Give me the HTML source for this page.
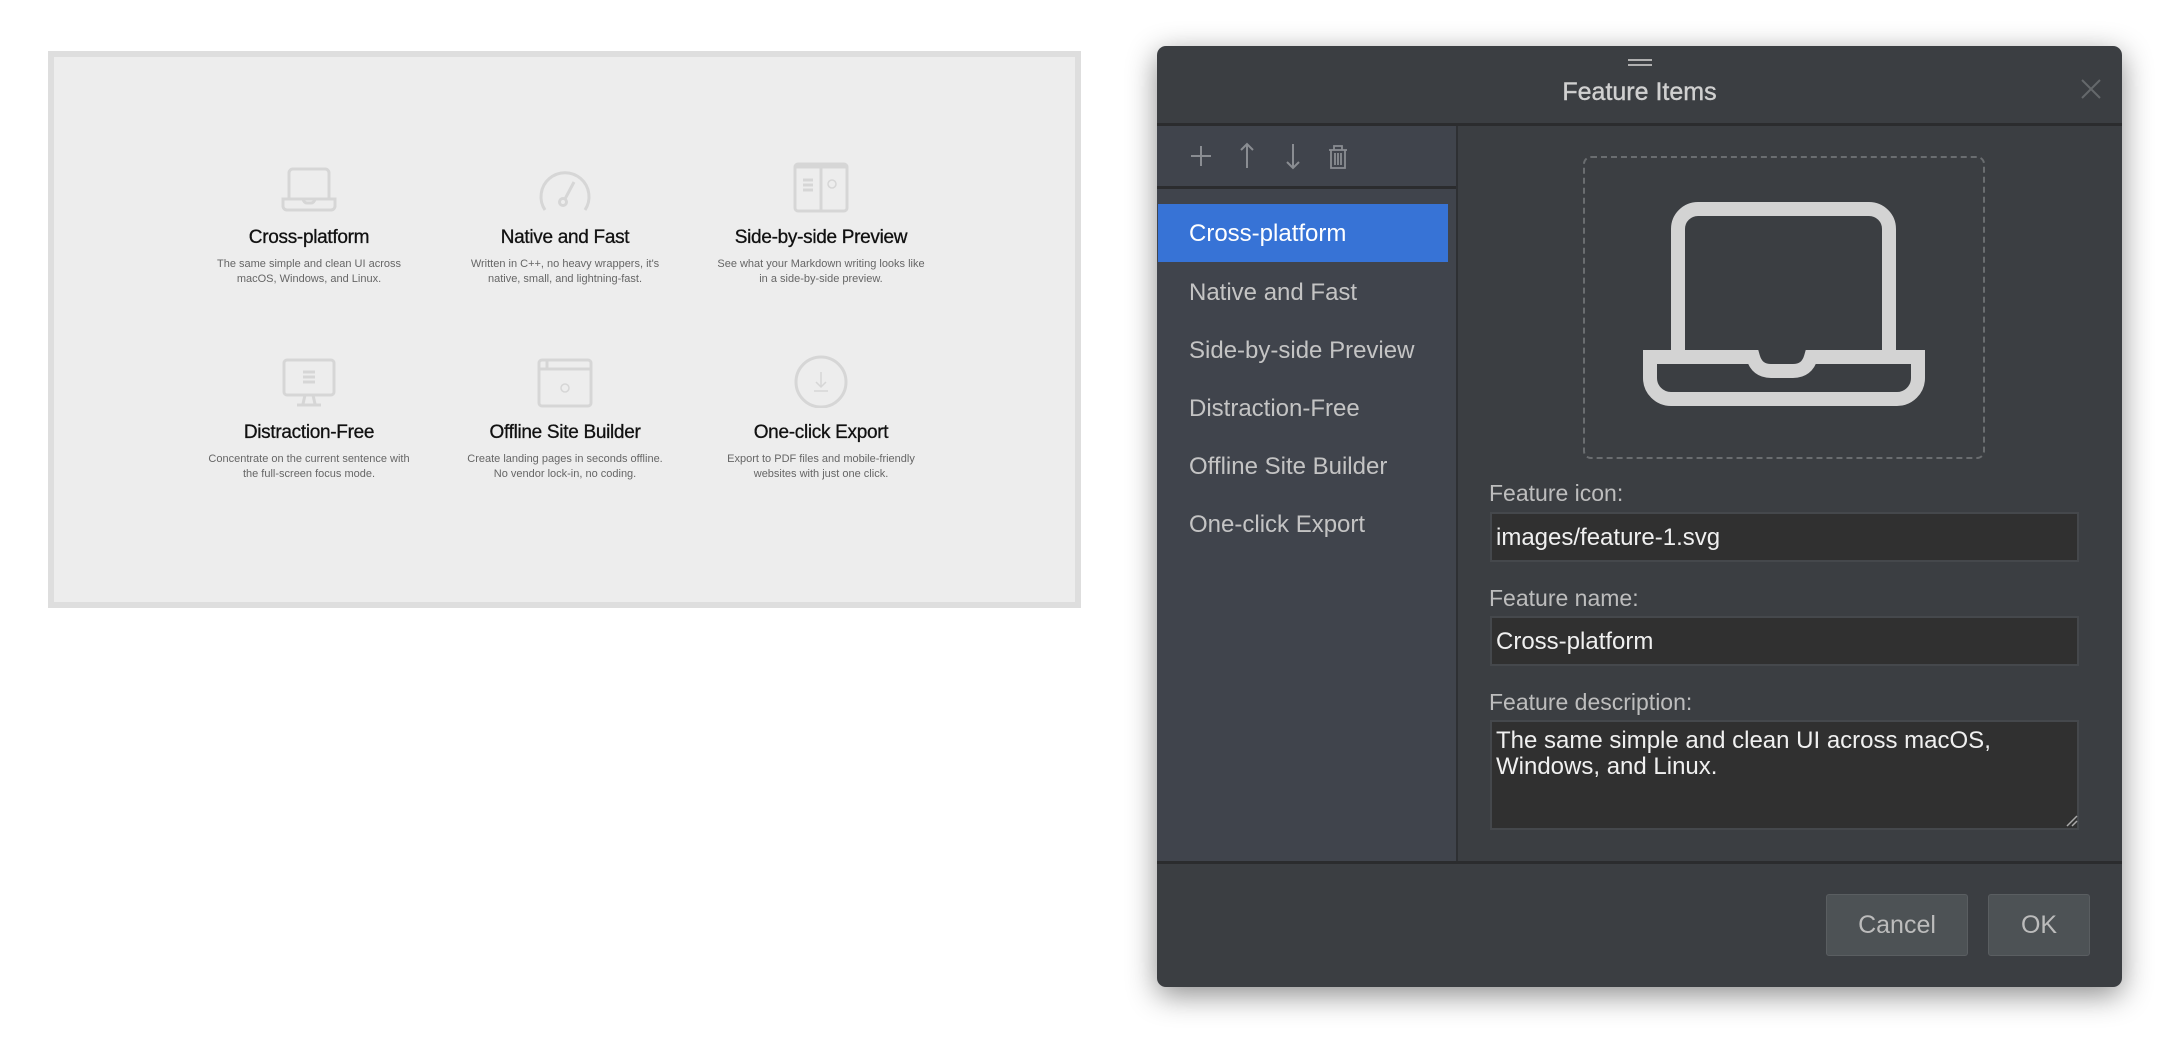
<!DOCTYPE html>
<html><head><meta charset="utf-8"><style>
*{margin:0;padding:0;box-sizing:border-box}
body{width:2170px;height:1040px;background:#fff;position:relative;overflow:hidden;font-family:"Liberation Sans","DejaVu Sans",sans-serif}
.a{position:absolute}
.panel{left:48px;top:51px;width:1033px;height:557px;background:#ededed;border:6px solid #dedede}
.feat{position:absolute;width:260px;text-align:center;color:#111}
.feat h3{font-size:19px;font-weight:normal;letter-spacing:-0.3px;line-height:22px;-webkit-text-stroke:0.3px #111}
.feat p{font-size:11px;color:#666;line-height:15px;margin-top:8px}
.feat svg{display:block;margin:0 auto 14px}
.dlg{left:1157px;top:46px;width:965px;height:941px;background:#3b3e42;border-radius:9px;box-shadow:0 8px 30px rgba(0,0,0,.45);overflow:hidden}
.item{position:absolute;left:32px;font-size:24px;color:#c4c4c4;line-height:30px}
.lbl{position:absolute;left:332px;font-size:23px;color:#bdbdbd}
.inp{position:absolute;left:333px;width:589px;background:#303030;border:2px solid #45484c;color:#f0f0f0;font-size:24px;padding-left:4px}
.btn{position:absolute;top:848px;height:62px;background:#4d5255;border:1px solid #5a5e61;border-radius:3px;color:#bcbcbc;font-size:25px;text-align:center;line-height:60px}
</style></head><body>
<div class="a panel">
 <div class="feat" style="left:125px;top:110px">
  <svg width="56" height="46" viewBox="0 0 56 46" fill="none" stroke="#d6d6d6" stroke-width="3"><path d="M8 32V6a4 4 0 0 1 4-4h32a4 4 0 0 1 4 4v26"/><path d="M2 32h52v7a4 4 0 0 1-4 4H6a4 4 0 0 1-4-4z"/><path d="M22 32q1 4 4 4h4q3 0 4-4"/></svg>
  <h3>Cross-platform</h3><p>The same simple and clean UI across<br>macOS, Windows, and Linux.</p></div>
 <div class="feat" style="left:381px;top:110px">
  <svg width="56" height="46" viewBox="0 0 56 46" fill="none" stroke="#d6d6d6" stroke-width="3"><path d="M8 43A24 24 0 1 1 48 43"/><circle cx="26" cy="35" r="3.5"/><path d="M28 32l9-17"/></svg>
  <h3>Native and Fast</h3><p>Written in C++, no heavy wrappers, it's<br>native, small, and lightning-fast.</p></div>
 <div class="feat" style="left:637px;top:105px">
  <svg width="56" height="51" viewBox="0 0 56 51" fill="none" stroke="#d6d6d6" stroke-width="3"><rect x="2" y="2" width="52" height="47" rx="3"/><path d="M2 5h52M28 2v47M10 18h10M10 23h10M10 28h10" /><circle cx="39" cy="22" r="4" stroke-width="1.5"/></svg>
  <h3>Side-by-side Preview</h3><p>See what your Markdown writing looks like<br>in a side-by-side preview.</p></div>
 <div class="feat" style="left:125px;top:301px">
  <svg width="56" height="50" viewBox="0 0 56 50" fill="none" stroke="#d6d6d6" stroke-width="3"><rect x="3" y="2" width="50" height="35" rx="3"/><path d="M22 14h12M22 19h12M22 24h12M24 37l-2 9M32 37l2 9M16 47h24"/></svg>
  <h3>Distraction-Free</h3><p>Concentrate on the current sentence with<br>the full-screen focus mode.</p></div>
 <div class="feat" style="left:381px;top:301px">
  <svg width="56" height="50" viewBox="0 0 56 50" fill="none" stroke="#d6d6d6" stroke-width="3"><rect x="2" y="2" width="52" height="46" rx="3"/><path d="M2 11h52M10 2v9"/><circle cx="28" cy="30" r="4" stroke-width="1.5"/></svg>
  <h3>Offline Site Builder</h3><p>Create landing pages in seconds offline.<br>No vendor lock-in, no coding.</p></div>
 <div class="feat" style="left:637px;top:298px">
  <svg width="56" height="53" viewBox="0 0 56 53" fill="none" stroke="#d6d6d6" stroke-width="3"><circle cx="28" cy="27" r="25"/><path d="M28 17v15M23 27l5 5 5-5M21 36h14" stroke-width="1.5"/></svg>
  <h3>One-click Export</h3><p>Export to PDF files and mobile-friendly<br>websites with just one click.</p></div>
</div>

<div class="a dlg">
 <div class="a" style="left:471px;top:13px;width:24px;height:2px;background:#b0b0b0"></div>
 <div class="a" style="left:471px;top:18px;width:24px;height:2px;background:#b0b0b0"></div>
 <div class="a" style="left:0;width:965px;top:32px;text-align:center;font-size:25px;color:#d0d0d0;-webkit-text-stroke:0.4px #d0d0d0">Feature Items</div>
 <svg class="a" style="left:923px;top:32px" width="22" height="22" viewBox="0 0 22 22" stroke="#65686b" stroke-width="2"><path d="M2 2l18 18M20 2L2 20"/></svg>
 <div class="a" style="left:0;top:77px;width:965px;height:3px;background:#2b2c2e"></div>
 <div class="a" style="left:0;top:80px;width:299px;height:736px;background:#40444c"></div>
 <div class="a" style="left:299px;top:80px;width:2px;height:736px;background:#2e3033"></div>
 <svg class="a" style="left:30px;top:94px" width="200" height="32" viewBox="0 0 200 32" fill="none" stroke="#8a8d92" stroke-width="2"><path d="M14 6v20M4 16h20"/><path d="M60 4v24M54 10l6-6 6 6"/><path d="M106 4v24M100 22l6 6 6-6"/><path d="M142 10h18M147 10V6h8v4M144 10v18h14V10M148 13v12M151 13v12M154 13v12" stroke-width="1.8"/></svg>
 <div class="a" style="left:0;top:140px;width:299px;height:3px;background:#2b2c2e"></div>
 <div class="a" style="left:1px;top:158px;width:290px;height:58px;background:#3773d6"></div>
 <div class="item" style="top:173px;color:#fff">Cross-platform</div>
 <div class="item" style="top:232px">Native and Fast</div>
 <div class="item" style="top:290px">Side-by-side Preview</div>
 <div class="item" style="top:348px">Distraction-Free</div>
 <div class="item" style="top:406px">Offline Site Builder</div>
 <div class="item" style="top:464px">One-click Export</div>
 <div class="a" style="left:426px;top:110px;width:402px;height:303px;border:2px dashed #6a6d70;border-radius:8px"></div>
 <svg class="a" style="left:0;top:0" width="965" height="941" viewBox="1157 46 965 941" fill="none" stroke="#d3d3d3" stroke-width="14"><path d="M1678 350V229a20 20 0 0 1 20-20h171a20 20 0 0 1 20 20v121"/><path d="M1650 357h103q4 14 18 14h22q14 0 18-14h107v21a21 21 0 0 1-21 21H1671a21 21 0 0 1-21-21z"/></svg>
 <div class="lbl" style="top:434px">Feature icon:</div>
 <div class="inp" style="top:466px;height:50px;line-height:48px">images/feature-1.svg</div>
 <div class="lbl" style="top:539px">Feature name:</div>
 <div class="inp" style="top:570px;height:50px;line-height:48px">Cross-platform</div>
 <div class="lbl" style="top:643px">Feature description:</div>
 <div class="inp" style="top:674px;height:110px;line-height:26px;padding-top:6px">The same simple and clean UI across macOS,<br>Windows, and Linux.</div>
 <svg class="a" style="left:909px;top:769px" width="12" height="12" stroke="#aaa" stroke-width="1.5"><path d="M1 11L11 1M6 11l5-5"/></svg>
 <div class="a" style="left:0;top:815px;width:965px;height:3px;background:#2b2c2e"></div>
 <div class="btn" style="left:669px;width:142px">Cancel</div>
 <div class="btn" style="left:831px;width:102px">OK</div>
</div>
</body></html>
